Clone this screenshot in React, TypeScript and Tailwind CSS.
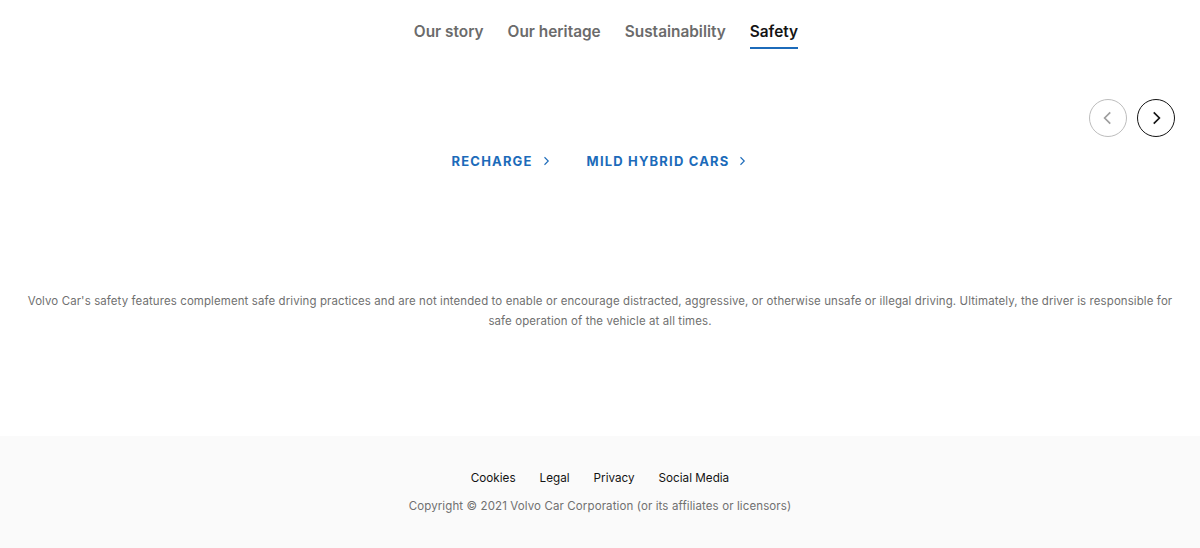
import React from 'react';

const tabs = ['Our story', 'Our heritage', 'Sustainability', 'Safety'];
const footerLinks = ['Cookies', 'Legal', 'Privacy', 'Social Media'];

const Chevron = ({ dir = 'right', className = '' }: { dir?: 'left' | 'right'; className?: string }) => (
  <svg viewBox="0 0 16 16" className={className} fill="none" stroke="currentColor" strokeWidth={1.5}>
    {dir === 'right' ? <path d="M6 3l5 5-5 5" /> : <path d="M10 3L5 8l5 5" />}
  </svg>
);

const App = () => {
  return (
    <div className="min-h-screen bg-white font-['Inter','Liberation_Sans',sans-serif]">
      <nav className="flex justify-center gap-[24px] pt-[21px] pl-[12px]">
        {tabs.map((t) => (
          <a
            key={t}
            className={`pb-[4px] text-[15.4px] font-semibold leading-[22px] border-b-2 ${
              t === 'Safety' ? 'text-[#141414] border-[#1c6bba]' : 'text-[#6b6b6b] border-transparent'
            }`}
          >
            {t}
          </a>
        ))}
      </nav>

      <div className="flex justify-end gap-[10px] pr-[25px] pt-[50px]">
        <button className="w-[38px] h-[38px] rounded-full border border-[#bdbdbd] text-[#9e9e9e] flex items-center justify-center">
          <Chevron dir="left" className="w-[18px] h-[18px]" />
        </button>
        <button className="w-[38px] h-[38px] rounded-full border border-[#141414] text-[#141414] flex items-center justify-center">
          <Chevron dir="right" className="w-[18px] h-[18px]" />
        </button>
      </div>

      <div className="flex justify-center gap-[35px] pt-[14px]">
        {['RECHARGE', 'MILD HYBRID CARS'].map((l) => (
          <a key={l} className="flex items-center gap-[7px] text-[13px] font-bold tracking-[0.09em] text-[#1c6bba] leading-[20px]">
            {l}
            <Chevron className="w-[12px] h-[12px]" />
          </a>
        ))}
      </div>

      <p className="mx-auto pt-[120px] px-[24px] text-center text-[11.45px] leading-[20px] text-[#707070] tracking-[0.01em]">
        Volvo Car's safety features complement safe driving practices and are not intended to enable or encourage
        distracted, aggressive, or otherwise unsafe or illegal driving. Ultimately, the driver is responsible for safe
        operation of the vehicle at all times.
      </p>

      <footer className="mt-[105px] bg-[#fafafa] h-[112px] pt-[33px] flex flex-col items-center">
        <div className="flex gap-[24px] text-[11.7px] text-[#141414] leading-[18px]">
          {footerLinks.map((l) => (
            <a key={l}>{l}</a>
          ))}
        </div>
        <p className="mt-[10px] text-[11.5px] text-[#707070] leading-[18px] tracking-[0.01em]">
          Copyright © 2021 Volvo Car Corporation (or its affiliates or licensors)
        </p>
      </footer>
    </div>
  );
};

export default App;
